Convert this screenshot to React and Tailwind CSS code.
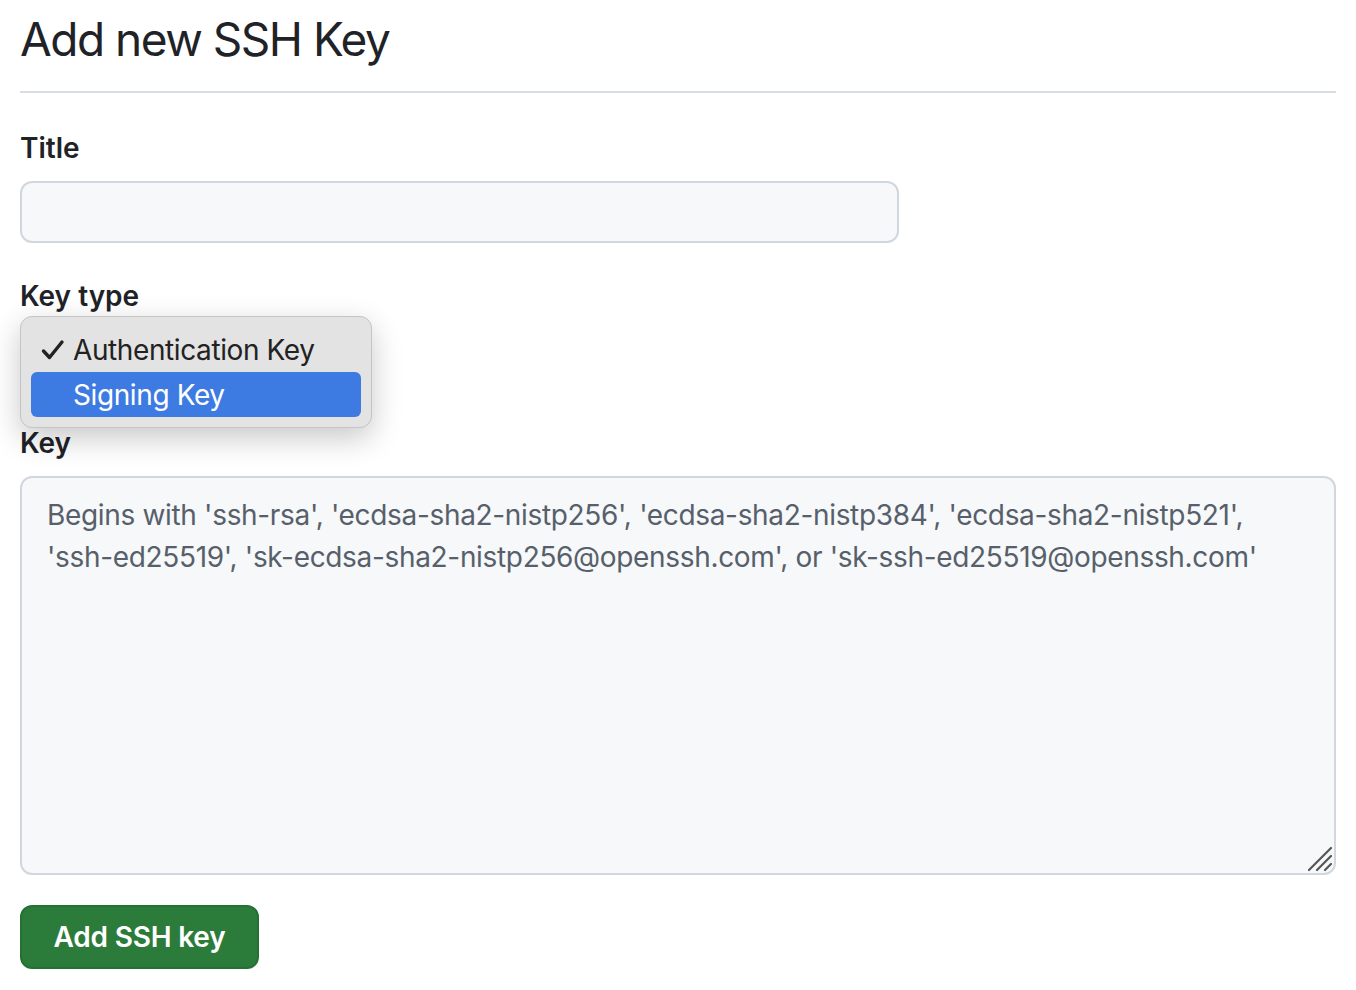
import React from "react";

const App = () => {
  return (
    <div className="min-h-screen bg-white px-5 font-['Inter','Liberation_Sans',sans-serif] text-[#1f2328]">
      <h1 className="pt-[10px] pb-[22px] border-b-2 border-[#d8dee4] text-[46px] leading-[59px] font-normal tracking-[-1.5px]">
        Add new SSH Key
      </h1>

      <form className="pt-[35px]">
        <label className="block text-[28px] leading-[40px] font-semibold">Title</label>
        <input
          type="text"
          className="mt-[13px] block w-[879px] h-[62px] rounded-[12px] border-2 border-[#d0d7de] bg-[#f6f8fa] px-6 text-[28px] outline-none"
        />

        <label className="mt-[33px] block text-[28px] leading-[40px] font-semibold">Key type</label>
        <div className="relative h-[107px] pt-[25px]">
          {/* the select sits under the open menu */}
          <div className="h-[62px] w-[340px] rounded-[12px] bg-[#f6f8fa]" />
          <div className="absolute left-0 top-0 w-[352px] rounded-[12px] border border-[#c4c4c4] bg-[#e3e3e3] px-[10px] pt-[10px] pb-[10px] shadow-[0_10px_30px_rgba(0,0,0,0.22)]">
            <div className="flex items-center h-[45px] text-[28px] tracking-[-0.4px] text-[#222]">
              <svg width="24" height="22" viewBox="0 0 24 22" className="ml-[10px] mr-[8px]">
                <path d="M2.5 12 L8.5 18.5 L21 3" fill="none" stroke="#222" strokeWidth="3.4" strokeLinecap="round" strokeLinejoin="round" />
              </svg>
              <span>Authentication Key</span>
            </div>
            <div className="flex items-center h-[45px] rounded-[6px] bg-[#3d7be2] pl-[42px] text-[28px] tracking-[-0.4px] text-white">
              Signing Key
            </div>
          </div>
        </div>

        <label className="block text-[28px] leading-[40px] font-semibold">Key</label>
        <div className="relative mt-[13px]">
          <textarea
            placeholder="Begins with 'ssh-rsa', 'ecdsa-sha2-nistp256', 'ecdsa-sha2-nistp384', 'ecdsa-sha2-nistp521', 'ssh-ed25519', 'sk-ecdsa-sha2-nistp256@openssh.com', or 'sk-ssh-ed25519@openssh.com'"
            className="block w-full h-[399px] resize-none rounded-[12px] border-2 border-[#d0d7de] bg-[#f6f8fa] px-[25px] py-[16px] text-[28px] leading-[42px] tracking-[-0.33px] text-[#1f2328] placeholder:text-[#57606a] outline-none"
          />
          {/* resize grip */}
          <svg width="26" height="26" viewBox="0 0 26 26" className="absolute right-[3px] bottom-[3px] pointer-events-none">
            <path d="M2 24 L24 2 M10 24 L24 10 M18 24 L24 18" stroke="#555" strokeWidth="2.2" strokeLinecap="round" />
          </svg>
        </div>

        <button
          type="button"
          className="mt-[30px] h-[64px] w-[239px] rounded-[12px] border-2 border-[#277034] bg-[#2b7b3a] text-[28px] font-semibold tracking-[-0.2px] text-white"
        >
          Add SSH key
        </button>
      </form>
    </div>
  );
};

export default App;
